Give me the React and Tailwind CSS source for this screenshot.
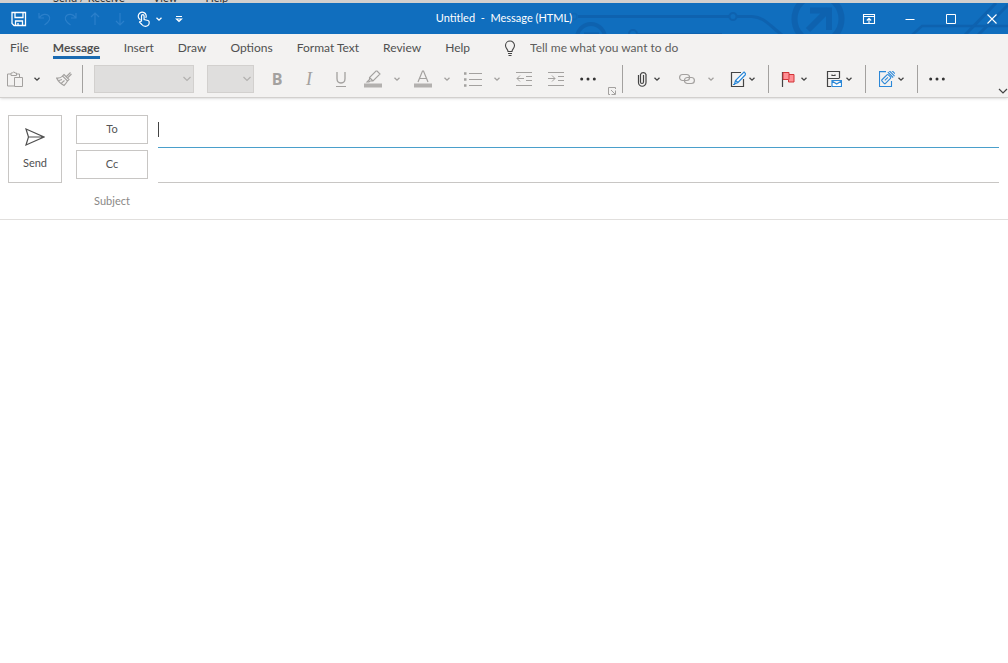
import { useState } from 'react';

const TABS = ['File', 'Message', 'Insert', 'Draw', 'Options', 'Format Text', 'Review', 'Help'];

function Icon({ size = 16, children, className = '' }) {
  return (
    <svg
      width={size}
      height={size}
      viewBox={`0 0 ${size} ${size}`}
      fill="none"
      stroke="currentColor"
      strokeWidth="1"
      className={`block shrink-0 ${className}`}
      aria-hidden="true"
    >
      {children}
    </svg>
  );
}

function Chevron({ label, className = '' }) {
  return (
    <button type="button" aria-label={label} className={`w-2 shrink-0 ${className}`}>
      <Icon size={8}>
        <path d="M1.5 2.8 4 5.2 6.5 2.8" strokeWidth="1.3" />
      </Icon>
    </button>
  );
}

function Tool({ label, className = '', children }) {
  return (
    <button type="button" aria-label={label} className={`flex shrink-0 items-center justify-center ${className}`}>
      {children}
    </button>
  );
}

function Divider({ className }) {
  return <span className={`h-7 w-px shrink-0 bg-[#a3a19f] ${className}`} />;
}

function Dots() {
  return (
    <Icon className="text-[#333333]">
      <g fill="currentColor" stroke="none">
        <circle cx="1.7" cy="8" r="1.5" />
        <circle cx="8" cy="8" r="1.5" />
        <circle cx="14.3" cy="8" r="1.5" />
      </g>
    </Icon>
  );
}

function Combo({ label, className }) {
  return (
    <div className={`relative h-7 shrink-0 ${className}`}>
      <select disabled aria-label={label} className="h-full w-full appearance-none border border-[#d2d0ce] bg-[#dfdedd]">
        <option></option>
      </select>
      <Icon size={8} className="pointer-events-none absolute top-2.5 right-[3px] text-[#b3b1af]">
        <path d="M.5 2 4 5.5 7.5 2" strokeWidth="1.2" />
      </Icon>
    </div>
  );
}

function Circuit() {
  return (
    <svg
      className="pointer-events-none absolute top-0 right-0 h-[31px] w-[440px]"
      viewBox="568 3 440 31"
      fill="none"
      stroke="#0d5ba6"
      aria-hidden="true"
    >
      <g opacity=".6">
        <circle cx="574" cy="16.500" r="3" strokeWidth="1.500" opacity=".6" />
        <path d="M578 16.500H729" strokeWidth="3" />
        <circle cx="733" cy="16.500" r="3.500" strokeWidth="2" />
        <path d="M737 16.500H752C764 17 769 25 782 35" strokeWidth="3" />
        <circle cx="591" cy="38" r="14" strokeWidth="4" />
        <path d="M584 34H599" strokeWidth="3" />
        <circle cx="633" cy="34" r="4" strokeWidth="2" />
        <path d="M637 33.500H722" strokeWidth="1" />
        <circle cx="818" cy="19" r="23.500" strokeWidth="6" />
        <path d="M808 30 829 9M810 10.500H829V30" strokeWidth="6" />
        <path d="M912 35 922 26H1008" strokeWidth="2.500" />
        <path d="M965 35 996 3M978 35 1008 5" strokeWidth="3" />
      </g>
    </svg>
  );
}

function TitleBar() {
  return (
    <header className="relative grid h-[31px] grid-cols-[1fr_auto_1fr] items-center overflow-hidden bg-[#106ebe] text-white">
      <Circuit />
      <div className="relative flex items-center pl-[11px]">
        <Tool label="Save">
          <Icon>
            <path d="M1 1.500H14.500V14.500H3L1 12.500ZM4 1.500V6.500H12V1.500M4.500 14.500V10H11.500V14.500M7 12V14.500" strokeWidth="1.3" />
          </Icon>
        </Tool>
        <div className="ml-2.5 flex items-center gap-[9px] text-[#2a7fca]">
          <Tool label="Undo">
            <Icon>
              <path d="M2 2V7H7M2.500 6.500C5 3 9 2.500 11.500 4.500C14 7 13 10 7.500 14" strokeWidth="1.2" />
            </Icon>
          </Tool>
          <Tool label="Redo">
            <Icon>
              <path d="M14 2V7H9M13.500 6.500C11 3 7 2.500 4.500 4.500C2 7 3 10 8.500 14" strokeWidth="1.2" />
            </Icon>
          </Tool>
          <Tool label="Previous item">
            <Icon>
              <path d="M8 14V2M4 6 8 2 12 6" strokeWidth="1.2" />
            </Icon>
          </Tool>
          <Tool label="Next item">
            <Icon>
              <path d="M8 2V14M4 10 8 14 12 10" strokeWidth="1.2" />
            </Icon>
          </Tool>
        </div>
        <Tool label="Touch/Mouse mode" className="ml-2">
          <Icon>
            <path d="M4.500 8.800A4 4 0 1 1 9.800 7" strokeWidth="1.2" />
            <path d="M5.500 10.500V5a1.300 1.300 0 0 1 2.600 0V8.500L12 9.500Q13.500 10 13.200 12Q12.800 15.300 9.500 15.300Q7 15.300 5.800 13.500L3.500 11.200Q4 9.800 5.500 10.500" strokeWidth="1.2" />
          </Icon>
        </Tool>
        <Chevron label="Touch/Mouse mode options" className="ml-[3px]" />
        <Tool label="Customize Quick Access Toolbar" className="ml-3">
          <Icon size={8}>
            <path d="M1 1.500H7M1.500 4H6.500L4 6.500Z" strokeWidth="1.2" />
          </Icon>
        </Tool>
      </div>
      <h1 className="relative text-[11px] whitespace-pre">Untitled  -  Message (HTML)</h1>
      <div className="relative flex justify-end gap-[25px] pr-2">
        <Tool label="Ribbon display options">
          <Icon>
            <path d="M2.500 3.500H13.500V12.500H2.500ZM2.500 5.500H13.500M8 12V7.500M5.800 9.500 8 7.300 10.200 9.500" strokeWidth="1.1" />
          </Icon>
        </Tool>
        <Tool label="Minimize">
          <Icon>
            <path d="M3.500 8.500H12.500" />
          </Icon>
        </Tool>
        <Tool label="Maximize">
          <Icon>
            <path d="M3.500 3.500H12.500V12.500H3.500Z" />
          </Icon>
        </Tool>
        <Tool label="Close">
          <Icon>
            <path d="M3.500 3.500 12.500 12.500M12.500 3.500 3.500 12.500" strokeWidth="1.1" />
          </Icon>
        </Tool>
      </div>
    </header>
  );
}

function TabRow({ active, onSelect }) {
  return (
    <nav className="flex h-7 items-center pl-2.5 text-xs text-[#505050]">
      <div className="flex gap-6">
        {TABS.map((tab) => (
          <button
            key={tab}
            type="button"
            onClick={() => onSelect(tab)}
            className={`relative h-7 ${tab === active ? 'font-bold' : ''}`}
          >
            {tab}
            {tab === active && <span className="absolute inset-x-0 bottom-[3px] h-[3px] bg-[#1a6ab1]" />}
          </button>
        ))}
      </div>
      <Icon className="ml-8 text-[#444444]">
        <path d="M6 11.500C6 9 3.500 8.500 3.500 5.500a4.500 4.500 0 0 1 9 0C12.500 8.500 10 9 10 11.500ZM6 13.500H10M6.500 15.500H9.500" strokeWidth="1.1" />
      </Icon>
      <input
        type="text"
        aria-label="Tell me what you want to do"
        placeholder="Tell me what you want to do"
        className="ml-3 w-48 bg-transparent outline-none placeholder:text-[#605e5c]"
      />
    </nav>
  );
}

function Ribbon() {
  return (
    <div className="flex h-9 items-center border-b border-[#d2d0ce] pb-0.5 text-[#a3a19f]">
      <Tool label="Paste" className="ml-[7px]">
        <Icon>
          <path d="M7 15H.500V3H4M9.500 3H12.500V6M4 4.500V2H5.500Q6.700-.500 8 2H9.500V4.500ZM7.500 6.500H15.500V15.500H7.500Z" />
        </Icon>
      </Tool>
      <Chevron label="Paste options" className="ml-2.5 text-[#444444]" />
      <Tool label="Format painter" className="ml-[15px]">
        <Icon>
          <path d="M14.500 1.500 10.500 5.500M15.500 3 12 6.500M8 3.500 13 8.500 11.500 10 6.500 5ZM6.500 5Q4.500 7.500.500 7Q3 12 8 14.500Q10 12.500 11.500 10M3 9.500 6 8.500M5.500 12 8.500 9.500" strokeWidth="1.1" />
        </Icon>
      </Tool>
      <Divider className="ml-2.5" />
      <Combo label="Font" className="ml-[11px] w-[100px]" />
      <Combo label="Font size" className="ml-[13px] w-[47px]" />

      <Tool label="Bold" className="ml-[7px] w-8 font-['Open_Sans',sans-serif] text-base font-bold">
        B
      </Tool>
      <Tool label="Italic" className="w-8 font-['Liberation_Serif',serif] text-lg italic">I</Tool>
      <Tool label="Underline" className="w-8">
        <Icon>
          <path d="M4 1V7.500Q4 12 8 12Q12 12 12 7.500V1" strokeWidth="1.3" />
          <path d="M3 15.500H13" />
        </Icon>
      </Tool>
      <Tool label="Text highlight color" className="ml-1.5">
        <Icon size={20}>
          <path d="M14 2 17 5 10 12H7L6 13H4L6.500 10.500V8.500L13 2ZM6.500 8.500 10 12" strokeWidth="1.1" />
          <path d="M1 16.500H19" strokeWidth="4" stroke="#b3b1af" />
        </Icon>
      </Tool>
      <Chevron label="Highlight colors" className="ml-2.5" />
      <Tool label="Font color" className="ml-3">
        <Icon size={20}>
          <path d="M5 13 9.500 2H10.500L15 13M6.500 9.500H13.500" strokeWidth="1.2" />
          <path d="M1 16.500H19" strokeWidth="4" stroke="#b3b1af" />
        </Icon>
      </Tool>
      <Chevron label="Font colors" className="ml-2.5" />
      <Tool label="Bullets" className="ml-3">
        <Icon size={20}>
          <path d="M6 4.500H19M6 10.500H19M6 16.500H19" />
          <path d="M1 4.500H3.500M1 10.500H3.500M1 16.500H3.500" strokeWidth="2.500" />
        </Icon>
      </Tool>
      <Chevron label="Bullet styles" className="ml-2.5" />
      <Tool label="Decrease indent" className="ml-[7px] w-8">
        <Icon>
          <path d="M0 1.500H16M10 5.500H16M10 9.500H16M0 14.500H16M1 7.500H8M4 4.500 1 7.500 4 10.500" />
        </Icon>
      </Tool>
      <Tool label="Increase indent" className="w-8">
        <Icon>
          <path d="M0 1.500H16M10 5.500H16M10 9.500H16M0 14.500H16M0 7.500H7M4 4.500 7 7.500 4 10.500" />
        </Icon>
      </Tool>
      <Tool label="More formatting" className="w-8">
        <Dots />
      </Tool>
      <Tool label="Font dialog" className="ml-1 self-end">
        <Icon size={8}>
          <path d="M7.500 2V.500H.500V7.500H2M3 3 7 7M7.500 3.500V7.500H3.500" />
        </Icon>
      </Tool>
      <Divider className="ml-1.5" />

      <Tool label="Attach file" className="ml-[11px] text-[#444444]">
        <Icon>
          <path d="M9.500 4V11a1.500 1.500 0 0 1-3 0V3.500a3 3 0 0 1 5.500 0V11.500a3.500 3.500 0 0 1-7.500 0V4" strokeWidth="1.2" />
        </Icon>
      </Tool>
      <Chevron label="Attachments" className="ml-[3px] text-[#444444]" />
      <Tool label="Link" className="ml-[18px]">
        <Icon>
          <rect x=".600" y="3.500" width="10" height="6" rx="3" strokeWidth="1.200" />
          <rect x="5.400" y="6.500" width="10" height="6" rx="3" strokeWidth="1.200" />
        </Icon>
      </Tool>
      <Chevron label="Link options" className="ml-3" />
      <Tool label="Signature" className="ml-[15px] text-[#444444]">
        <Icon>
          <path d="M11 1.500H1.500V15.500H13.500V8" strokeWidth="1.2" />
          <path d="M14 1 16 3 8 11.500 4.500 13 5.500 9.500ZM5.500 9.500 8 11.500M3 13.500H5" fill="#ffffff" stroke="#2b88d8" strokeWidth="1.2" />
        </Icon>
      </Tool>
      <Chevron label="Signatures" className="ml-0.5 text-[#444444]" />
      <Divider className="ml-3" />
      <Tool label="Follow up" className="ml-3 text-[#444444]">
        <Icon>
          <path d="M1.500 1V16" strokeWidth="1.2" />
          <path d="M2 1.500H8V3.500H13V11H7.500V8.500H2Z" fill="#ff8f94" stroke="#d13438" />
          <path d="M8 3.500V8.500" stroke="#d13438" />
        </Icon>
      </Tool>
      <Chevron label="Follow up options" className="ml-[3px] text-[#444444]" />
      <Tool label="Assign policy" className="ml-[18px] text-[#444444]">
        <Icon>
          <path d="M13.500 7V.500H1.500V15.500H5M1.500 7.500H13.500M6 3.500V4.500H9V3.500" strokeWidth="1.2" />
          <path d="M6 9.500H15.500V15.500H6ZM6 10 10.700 13 15.500 10" fill="#ffffff" stroke="#2b88d8" strokeWidth="1.2" />
        </Icon>
      </Tool>
      <Chevron label="Policy options" className="ml-[3px] text-[#444444]" />
      <Divider className="ml-3" />
      <Tool label="View templates" className="ml-[13px] text-[#2b88d8]">
        <Icon>
          <path d="M7 .600H.500V15.500H12.500V10" strokeWidth="1.1" />
          <g transform="rotate(-45 8.500 6.500)">
            <rect x="2" y="4.200" width="9" height="5" rx="1" strokeWidth="1.1" />
            <path d="M4.500 6.700H9" />
            <path d="M12.500 3V10.500M14.500 2.500V10.500M16.500 4V9" strokeWidth="1.1" />
          </g>
        </Icon>
      </Tool>
      <Chevron label="Template options" className="ml-0.5 text-[#444444]" />
      <Divider className="ml-3" />
      <Tool label="More commands" className="ml-[3px] w-8">
        <Dots />
      </Tool>
      <Tool label="Collapse ribbon" className="ml-auto self-end text-[#444444]">
        <Icon size={10}>
          <path d="M1 4 5 8 9 4" strokeWidth="1.2" />
        </Icon>
      </Tool>
    </div>
  );
}

function AddressRow({ label, lineClass, children }) {
  return (
    <div className="flex h-[35px] gap-2.5">
      <button type="button" className="mt-0.5 h-[29px] w-[72px] border border-[#c8c6c4] text-[#555555]">
        {label}
      </button>
      <div className={`relative flex-1 border-b ${lineClass}`}>
        <input type="text" aria-label={label} className="h-full w-full bg-transparent px-1 outline-none" />
        {children}
      </div>
    </div>
  );
}

export default function App() {
  const [activeTab, setActiveTab] = useState('Message');

  return (
    <div className="flex min-h-screen flex-col bg-white font-['Lato','Open_Sans',sans-serif]">
      {/* bottom edge of the main window's menu, behind this one */}
      <div className="flex h-[3px] items-end gap-7 overflow-hidden bg-[#d2d0ce] pl-[53px] text-[11px] leading-[11px] text-[#333333]">
        <span>Send / Receive</span>
        <span>View</span>
        <span>Help</span>
      </div>
      <TitleBar />
      <div className="bg-[#f3f2f1] shadow-sm">
        <TabRow active={activeTab} onSelect={setActiveTab} />
        <Ribbon />
      </div>

      <form className="flex flex-1 flex-col text-[11px]" onSubmit={(e) => e.preventDefault()}>
        <div className="flex gap-3.5 border-b border-[#e1dfdd] pt-[15px] pr-[9px] pl-2">
          <button
            type="submit"
            className="mt-0.5 flex h-[68px] w-[54px] flex-col items-center justify-center gap-2 border border-[#c8c6c4] text-[#505050]"
          >
            <Icon size={20}>
              <path d="M1 2 19 10 1 18 3.500 10ZM3.500 10H19" strokeWidth="1.2" />
            </Icon>
            Send
          </button>
          <div className="flex-1">
            <AddressRow label="To" lineClass="border-[#4a9fcb]">
              <span className="absolute top-[9px] left-0 h-[15px] w-px bg-[#444444]" />
            </AddressRow>
            <AddressRow label="Cc" lineClass="border-[#c8c6c4]" />
            <div className="flex h-9 items-center gap-2.5">
              <label htmlFor="subject" className="w-[72px] text-center text-[#8a8886]">
                Subject
              </label>
              <input id="subject" type="text" className="flex-1 bg-transparent px-1 outline-none" />
            </div>
          </div>
        </div>
        <textarea aria-label="Message body" className="w-full flex-1 resize-none p-2 outline-none" />
      </form>
    </div>
  );
}
